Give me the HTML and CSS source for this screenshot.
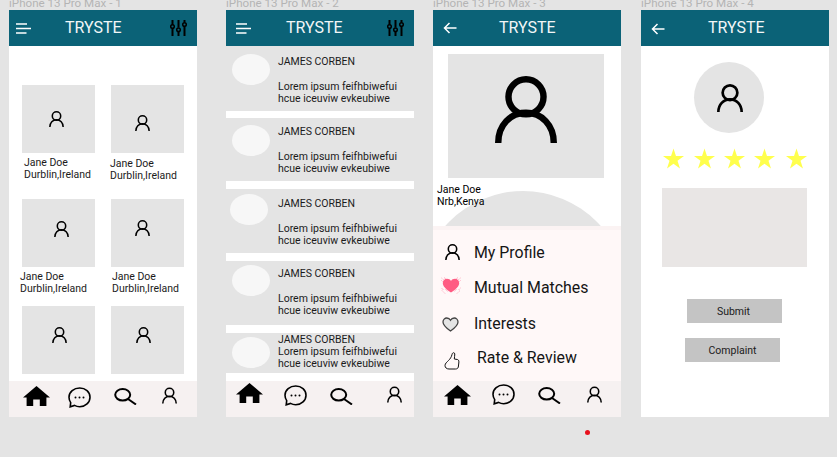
FILE: index.html
```html
<!DOCTYPE html>
<html lang="en">
<head>
<meta charset="utf-8">
<title>TRYSTE wireframes</title>
<link rel="stylesheet" href="styles.css">
</head>
<body>
<svg class="defs" width="0" height="0" aria-hidden="true">
  <symbol id="person" viewBox="0 0 26 28"><circle cx="13" cy="8.700" r="7.350" fill="none" stroke="#000" stroke-width="2.700"/><path d="M1.350 28C1.350 20.500 6.500 15.400 13 15.400S24.650 20.500 24.650 28" fill="none" stroke="#000" stroke-width="2.700"/></symbol>
  <symbol id="home" viewBox="0 0 27 20"><path d="M13.500 0 27 11.400h-3.600V20h-6.600v-6.400h-6.600V20H3.600V11.400H0Z" fill="#000"/></symbol>
  <symbol id="chat" viewBox="0 0 23 21"><path d="M11.700 1C17.500 1 22 5 22 10.200S17.500 19.700 11.700 19.700C9.700 19.700 8 19.200 6.500 18.400L2.200 19.800 2.700 15.600C1.600 14 1 12.200 1 10.200 1 5 5.900 1 11.700 1Z" fill="none" stroke="#000" stroke-width="1.600"/><circle cx="7.500" cy="10.500" r="1" fill="#000"/><circle cx="11.500" cy="10.500" r="1" fill="#000"/><circle cx="15.500" cy="10.500" r="1" fill="#000"/></symbol>
  <symbol id="search" viewBox="0 0 23 17"><ellipse cx="8.700" cy="6.800" rx="7.500" ry="5.800" fill="none" stroke="#000" stroke-width="2"/><path d="M14 11l8 5.500" fill="none" stroke="#000" stroke-width="2"/></symbol>
  <symbol id="menu" viewBox="0 0 15 11"><path d="M0 1h11M0 5.500h15M0 10h10.500" stroke="#fff" stroke-width="1.500" fill="none"/></symbol>
  <symbol id="filter" viewBox="0 0 17 16"><path d="M2.500 0v5M2.500 8.500V16M8.500 0v7.500M8.500 11.500V16M14.500 0v2.500M14.500 6.500V16" stroke="#000" stroke-width="2" fill="none"/><circle cx="2.500" cy="6.500" r="1.800" fill="none" stroke="#000" stroke-width="1.500"/><circle cx="8.500" cy="9.700" r="1.800" fill="none" stroke="#000" stroke-width="1.500"/><circle cx="14.500" cy="4.500" r="1.800" fill="none" stroke="#000" stroke-width="1.500"/></symbol>
  <symbol id="back" viewBox="0 0 14 12"><path d="M13.500 6H1.500M6.500 1 1.500 6l5 5" stroke="#fff" stroke-width="1.500" fill="none"/></symbol>
  <symbol id="star" viewBox="0 0 22 21"><path d="M11 0l2.600 7.900H22l-6.800 5 2.600 8L11 16l-6.800 4.900 2.600-8L0 7.900h8.400Z" fill="#ffff4d"/></symbol>
</svg>

<main class="canvas">

  <section class="artboard">
    <p class="board-label">iPhone 13 Pro Max - 1</p>
    <div class="frame">
      <header class="top">
        <svg class="ic-menu"><use href="#menu"/></svg>
        <h1 class="title title-a">TRYSTE</h1>
        <svg class="ic-filter"><use href="#filter"/></svg>
      </header>
      <div class="grid">
        <article class="card">
          <div class="tile"><svg class="ic-person p1"><use href="#person"/></svg></div>
          <p class="who w1">Jane Doe<br>Durblin,Ireland</p>
        </article>
        <article class="card">
          <div class="tile"><svg class="ic-person p2"><use href="#person"/></svg></div>
          <p class="who w2">Jane Doe<br>Durblin,Ireland</p>
        </article>
        <article class="card">
          <div class="tile"><svg class="ic-person p3"><use href="#person"/></svg></div>
          <p class="who w3">Jane Doe<br>Durblin,Ireland</p>
        </article>
        <article class="card">
          <div class="tile"><svg class="ic-person p4"><use href="#person"/></svg></div>
          <p class="who w4">Jane Doe<br>Durblin,Ireland</p>
        </article>
        <article class="card">
          <div class="tile"><svg class="ic-person p5"><use href="#person"/></svg></div>
        </article>
        <article class="card">
          <div class="tile"><svg class="ic-person p6"><use href="#person"/></svg></div>
        </article>
      </div>
      <nav class="bar bar-1">
        <svg class="ic-home"><use href="#home"/></svg>
        <svg class="ic-chat"><use href="#chat"/></svg>
        <svg class="ic-search"><use href="#search"/></svg>
        <svg class="ic-user"><use href="#person"/></svg>
      </nav>
    </div>
  </section>

  <section class="artboard board-2">
    <p class="board-label">iPhone 13 Pro Max - 2</p>
    <div class="frame">
      <header class="top">
        <svg class="ic-menu"><use href="#menu"/></svg>
        <h1 class="title title-b">TRYSTE</h1>
        <svg class="ic-filter"><use href="#filter"/></svg>
      </header>
      <div class="list">
        <article class="row r1"><span class="dot"></span><div class="msg"><h2 class="name">JAMES CORBEN</h2><p class="text">Lorem ipsum feifhbiwefui<br>hcue iceuviw evkeubiwe</p></div></article>
        <article class="row r2"><span class="dot"></span><div class="msg"><h2 class="name">JAMES CORBEN</h2><p class="text">Lorem ipsum feifhbiwefui<br>hcue iceuviw evkeubiwe</p></div></article>
        <article class="row r3"><span class="dot"></span><div class="msg"><h2 class="name">JAMES CORBEN</h2><p class="text">Lorem ipsum feifhbiwefui<br>hcue iceuviw evkeubiwe</p></div></article>
        <article class="row r4"><span class="dot"></span><div class="msg"><h2 class="name">JAMES CORBEN</h2><p class="text">Lorem ipsum feifhbiwefui<br>hcue iceuviw evkeubiwe</p></div></article>
        <article class="row r5"><span class="dot"></span><div class="msg"><h2 class="name">JAMES CORBEN</h2><p class="text tight">Lorem ipsum feifhbiwefui<br>hcue iceuviw evkeubiwe</p></div></article>
      </div>
      <nav class="bar bar-2">
        <svg class="ic-home"><use href="#home"/></svg>
        <svg class="ic-chat"><use href="#chat"/></svg>
        <svg class="ic-search"><use href="#search"/></svg>
        <svg class="ic-user"><use href="#person"/></svg>
      </nav>
    </div>
  </section>

  <section class="artboard board-3">
    <p class="board-label">iPhone 13 Pro Max - 3</p>
    <div class="frame">
      <header class="top">
        <svg class="ic-back"><use href="#back"/></svg>
        <h1 class="title title-c">TRYSTE</h1>
      </header>
      <div class="profile">
        <div class="photo"><svg class="ic-big"><use href="#person"/></svg></div>
        <p class="who w5">Jane Doe<br>Nrb,Kenya</p>
        <div class="arc"></div>
      </div>
      <ul class="side">
        <li class="item i1">
          <svg class="ic-item"><use href="#person"/></svg>
          <span class="label">My Profile</span>
        </li>
        <li class="item i2">
          <svg class="ic-match" viewBox="0 0 20 17">
            <path d="M.5 1 4 4M.5 3.500 3 6M3 .5 6 3M.5 11 3 13.500M1 13.500 4 16.500M4.500 12 7 15M19.500 1 16 4M19.500 3.500 17 6M17 .5 14 3M19.500 11 17 13.500M19 13.500 16 16.500M15.500 12 13 15" stroke="#ff9db5" stroke-width="1" stroke-dasharray="1 .8" fill="none"/>
            <path d="M10 15.500C4.500 11.800 1.800 9.200 1.800 6 1.800 3.500 3.800 1.800 6 1.800 7.800 1.800 9.200 2.700 10 4 10.800 2.700 12.200 1.800 14 1.800 16.200 1.800 18.200 3.500 18.200 6 18.200 9.200 15.500 11.800 10 15.500Z" fill="#ff5c83"/>
          </svg>
          <span class="label">Mutual Matches</span>
        </li>
        <li class="item i3">
          <svg class="ic-heart" viewBox="0 0 17 15"><path d="M8.500 14C3.500 10.500 1 8 1 5 1 2.700 2.800 1 4.800 1 6.300 1 7.700 1.800 8.500 3.200 9.300 1.800 10.700 1 12.200 1 14.200 1 16 2.700 16 5 16 8 13.500 10.500 8.500 14Z" fill="#e4e4e4" stroke="#444" stroke-width="1.300"/></svg>
          <span class="label">Interests</span>
        </li>
        <li class="item i4">
          <svg class="ic-thumb" viewBox="0 0 16 19"><path d="M1 14.500C1 12.500 3 11 4.500 9.500 6 8 7.500 6 8 3.500 8.300 1.500 10.500 1 10.800 3 11.100 5 10 6.500 10.300 8L13.500 8.500C15 9 15 10.500 14.800 12L14.300 16C14 17.500 12.800 18 11.500 18L5 18C2.500 18 1 16.500 1 14.500Z" fill="none" stroke="#111" stroke-width="1"/></svg>
          <span class="label">Rate &amp; Review</span>
        </li>
      </ul>
      <nav class="bar bar-3">
        <svg class="ic-home"><use href="#home"/></svg>
        <svg class="ic-chat"><use href="#chat"/></svg>
        <svg class="ic-search"><use href="#search"/></svg>
        <svg class="ic-user"><use href="#person"/></svg>
      </nav>
    </div>
  </section>

  <section class="artboard board-4">
    <p class="board-label">iPhone 13 Pro Max - 4</p>
    <div class="frame">
      <header class="top">
        <svg class="ic-back"><use href="#back"/></svg>
        <h1 class="title title-d">TRYSTE</h1>
      </header>
      <div class="review">
        <div class="avatar"><svg class="ic-avatar"><use href="#person"/></svg></div>
        <div class="stars">
          <svg class="ic-star"><use href="#star"/></svg>
          <svg class="ic-star"><use href="#star"/></svg>
          <svg class="ic-star"><use href="#star"/></svg>
          <svg class="ic-star"><use href="#star"/></svg>
          <svg class="ic-star"><use href="#star"/></svg>
        </div>
        <div class="note"></div>
        <button class="btn btn-submit" type="button">Submit</button>
        <button class="btn btn-complaint" type="button">Complaint</button>
      </div>
    </div>
  </section>

  <span class="cursor-dot"></span>
</main>
</body>
</html>
```

FILE: styles.css
```css
* { box-sizing: border-box; }
html, body { margin: 0; padding: 0; }
body { width: 837px; height: 457px; overflow: hidden; background: #e4e4e4; font-family: Roboto, "Noto Sans", sans-serif; color: #111; }
p, h1, h2, ul { margin: 0; padding: 0; font-weight: 400; }
ul { list-style: none; }
svg { display: block; flex: none; }
.defs { position: absolute; }

.canvas { position: relative; display: flex; height: 457px; padding-left: 9px; }
.artboard { width: 188px; }
.board-2 { margin-left: 29px; }
.board-3 { margin-left: 19px; }
.board-4 { margin-left: 20px; }
.board-label { height: 10px; overflow: hidden; font-size: 11.600px; line-height: 6px; color: #b4b4b4; white-space: nowrap; }
.frame { position: relative; display: flex; flex-direction: column; width: 188px; height: 407px; overflow: hidden; background: #fff; }

.top { display: flex; align-items: center; flex: none; height: 36px; padding-left: 7px; background: #0b6277; }
.ic-menu { width: 15px; height: 11px; margin-top: 1px; }
.board-2 .ic-menu { margin-left: 3px; }
.ic-filter { width: 17px; height: 16px; margin-left: auto; margin-right: 10px; }
.ic-back { width: 14px; height: 12px; margin-left: 3px; margin-top: -1px; }
.board-4 .ic-back { margin-top: 1px; }
.title { font-size: 16px; line-height: 36px; color: #f2f6f7; }
.title-a { margin-left: 34px; }
.title-b { margin-left: 35px; }
.title-c { margin-left: 42px; }
.title-d { margin-left: 43px; }

.grid { display: grid; flex: none; grid-template-columns: 73px 73px; grid-template-rows: 114px 107px 68px; column-gap: 16px; height: 335px; padding: 39px 0 0 13px; }
.card { min-width: 0; }
.tile { display: flex; height: 68px; background: #e4e4e4; }
.ic-person { width: 15px; height: 16px; }
.p1 { margin: 26px 0 0 27px; }
.p2 { margin: 30px 0 0 24px; }
.p3 { margin: 22px 0 0 32px; }
.p4 { margin: 21px 0 0 24px; }
.p5 { margin: 21px 0 0 30px; }
.p6 { margin: 21px 0 0 25px; }
.who { font-size: 10.500px; line-height: 12px; white-space: nowrap; color: #1b1b1b; }
.w1 { margin: 4px 0 0 2px; }
.w2 { margin: 5px 0 0 -1px; }
.w3 { margin: 4px 0 0 -2px; }
.w4 { margin: 4px 0 0 1px; }

.bar { display: flex; flex: none; height: 36px; margin-top: auto; background: #f6f1f1; }
.ic-home { width: 27px; height: 20px; }
.ic-chat { width: 23px; height: 21px; }
.ic-search { width: 23px; height: 17px; }
.ic-user { width: 15px; height: 17px; }
.bar-1 .ic-home { margin: 5px 0 0 14px; }
.bar-1 .ic-chat { margin: 6px 0 0 18px; }
.bar-1 .ic-search { margin: 7px 0 0 23px; }
.bar-1 .ic-user { margin: 6px 0 0 25px; }
.bar-2 .ic-home { margin: 2px 0 0 10px; }
.bar-2 .ic-chat { margin: 4px 0 0 21px; }
.bar-2 .ic-search { margin: 7px 0 0 23px; }
.bar-2 .ic-user { margin: 5px 0 0 34px; }
.bar-3 .ic-home { margin: 4px 0 0 11px; }
.bar-3 .ic-chat { margin: 3px 0 0 21px; }
.bar-3 .ic-search { margin: 6px 0 0 23px; }
.bar-3 .ic-user { margin: 5px 0 0 26px; }

.list { display: flex; flex-direction: column; flex: none; }
.row { display: flex; flex: none; background: #e4e4e4; }
.r1 { height: 65px; margin-bottom: 7px; }
.r2 { height: 63px; margin-bottom: 8px; }
.r3 { height: 64px; margin-bottom: 8px; }
.r4 { height: 64px; margin-bottom: 8px; }
.r5 { height: 40px; }
.dot { flex: none; width: 38px; height: 31px; margin: 8px 0 0 6px; border-radius: 50%; background: #f7f7f7; }
.r2 .dot { margin-top: 7px; }
.r3 .dot { margin: 5px 0 0 4px; }
.r4 .dot { margin-top: 4px; }
.r5 .dot { margin-top: 4px; }
.msg { margin-left: 8px; padding-top: 10px; }
.r2 .msg { padding-top: 8px; }
.r3 .msg { margin-left: 10px; padding-top: 9px; }
.r4 .msg { padding-top: 7px; }
.r5 .msg { padding-top: 1px; }
.name { font-size: 10.500px; line-height: 12px; color: #1b1b1b; }
.text { margin-top: 13px; font-size: 10.500px; line-height: 12px; color: #1b1b1b; white-space: nowrap; }
.text.tight { margin-top: 0; }

.profile { position: relative; flex: none; height: 180px; padding: 8px 0 0 15px; overflow: hidden; }
.photo { display: flex; align-items: center; justify-content: center; width: 156px; height: 124px; background: #e4e4e4; }
.ic-big { width: 62px; height: 67px; margin-left: -1px; margin-top: -13px; }
.w5 { position: relative; z-index: 1; margin: 6px 0 0 -11px; color: #000; }
.arc { position: absolute; left: -14px; top: 145px; width: 208px; height: 208px; border-radius: 50%; background: #e4e4e4; }

.side { flex: 1; background: #fff8f8; border-top: 4px solid #fbf3f3; padding-top: 13px; }
.item { display: flex; align-items: center; font-size: 15.900px; line-height: 20px; color: #151515; }
.label { white-space: nowrap; }
.ic-item { width: 15px; height: 16px; margin: -3px 14px 0 12px; }
.ic-match { width: 20px; height: 17px; margin: -5px 13px 0 8px; }
.ic-heart { width: 17px; height: 15px; margin: 0 15px 0 9px; }
.ic-thumb { width: 16px; height: 19px; margin: 5px 17px 0 11px; }
.i2 { margin-top: 15px; }
.i3 { margin-top: 16px; }
.i4 { margin-top: 12px; }

.review { display: flex; flex-direction: column; align-items: flex-start; flex: 1; }
.avatar { display: flex; align-items: center; justify-content: center; width: 70px; height: 71px; margin: 16px 0 0 53px; border-radius: 50%; background: #e4e4e4; }
.ic-avatar { width: 26px; height: 28px; margin-left: 1px; }
.stars { display: flex; margin: 15px 0 0 22px; }
.ic-star { width: 21px; height: 21px; }
.ic-star + .ic-star { margin-left: 10px; }
.ic-star:nth-child(3) { margin-left: 9px; }
.ic-star:nth-child(4) { margin-left: 8.500px; }
.ic-star:nth-child(5) { margin-left: 11px; }
.note { width: 145px; height: 79px; margin: 19px 0 0 21px; background: #e9e6e5; }
.btn { width: 95px; height: 24px; padding: 1px 0 0; border: 0; border-radius: 0; background: #c4c4c4; font: 400 10.500px/23px Roboto, sans-serif; color: #1b1b1b; }
.btn-submit { margin: 32px 0 0 46px; padding-right: 2px; }
.btn-complaint { margin: 15px 0 0 44px; }

.cursor-dot { position: absolute; left: 585px; top: 430px; width: 5px; height: 5px; border-radius: 50%; background: #e8101c; }
```
